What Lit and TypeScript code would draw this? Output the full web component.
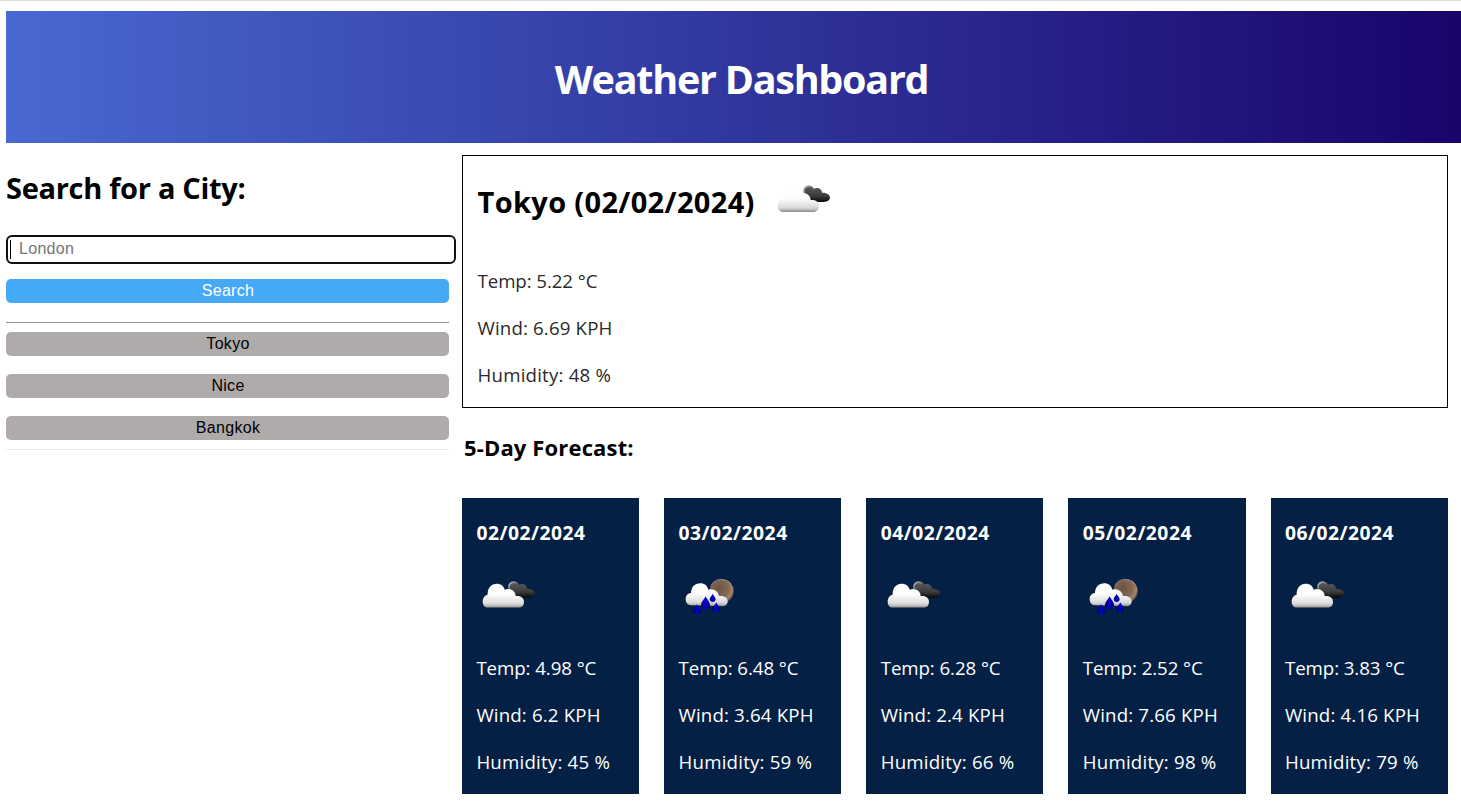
import { LitElement, html, css, svg } from "lit";
import { customElement, property } from "lit/decorators.js";

type Kind = "clouds" | "rain";
interface Day { date: string; kind: Kind; temp: string; wind: string; humidity: string; }

const DAYS: Day[] = [
  { date: "02/02/2024", kind: "clouds", temp: "4.98", wind: "6.2", humidity: "45" },
  { date: "03/02/2024", kind: "rain", temp: "6.48", wind: "3.64", humidity: "59" },
  { date: "04/02/2024", kind: "clouds", temp: "6.28", wind: "2.4", humidity: "66" },
  { date: "05/02/2024", kind: "rain", temp: "2.52", wind: "7.66", humidity: "98" },
  { date: "06/02/2024", kind: "clouds", temp: "3.83", wind: "4.16", humidity: "79" },
];
const CITIES = ["Tokyo", "Nice", "Bangkok"];

const rowStyles = css`
  .row { margin: 0; height: 30px; line-height: 30px; font-size: 18.7px; }
  .row + .row { margin-top: 17px; }
  .temp { letter-spacing: -0.08px; }
  .wind { letter-spacing: 0.15px; }
  .humidity { letter-spacing: 0.2px; }
`;

@customElement("weather-icon")
export class WeatherIcon extends LitElement {
  @property() kind: Kind = "clouds";

  static styles = css`
    :host { display: block; width: 64px; height: 50px; }
    .icon { display: block; width: 64px; height: 50px; }
  `;

  private defs() {
    return svg`<defs>
      <linearGradient id="white" x1="0" y1="0" x2="0" y2="1">
        <stop offset="0" stop-color="#fff"/><stop offset=".45" stop-color="#fdfdfd"/>
        <stop offset=".82" stop-color="#dcdcdc"/><stop offset=".94" stop-color="#b5b5b5"/><stop offset="1" stop-color="#666"/>
      </linearGradient>
      <linearGradient id="dark" x1="0" y1="0" x2="0" y2="1">
        <stop offset="0" stop-color="#5a5a5a"/><stop offset=".6" stop-color="#3c3b3b"/><stop offset="1" stop-color="#080808"/>
      </linearGradient>
      <linearGradient id="rim" x1="0" y1="0" x2="1" y2="1">
        <stop offset="0" stop-color="#ccc"/><stop offset=".5" stop-color="#777"/><stop offset="1" stop-color="#333"/>
      </linearGradient>
      <radialGradient id="moon" cx=".38" cy=".35" r=".68">
        <stop offset="0" stop-color="#6a5344"/><stop offset=".6" stop-color="#866852"/><stop offset=".85" stop-color="#a08671"/><stop offset="1" stop-color="#59483d"/>
      </radialGradient>
      <linearGradient id="drop" x1="0" y1="0" x2="1" y2="0">
        <stop offset="0" stop-color="#000070"/><stop offset=".5" stop-color="#0505c8"/><stop offset="1" stop-color="#00007a"/>
      </linearGradient>
    </defs>`;
  }

  private clouds() {
    return html`<svg class="icon" viewBox="18 -1 192 150">${this.defs()}
      <circle cx="131" cy="49" r="16.5" fill="url(#rim)"/>
      <path fill="url(#dark)" d="M119 47C123 36 137 35 145 44C156 37 171 42 171 55C184 55 195 61 195 69C195 78 187 83 176 83H150C135 82 121 70 119 47Z"/>
      <path fill="url(#white)" d="M54 112C44 112 38 104 38 94C38 83 44 75 53 73C52 53 64 40 80 40C92 40 101 46 104 58C119 52 137 61 137 77C153 75 162 84 162 94C162 105 156 112 145 112Z"/>
    </svg>`;
  }

  private rain() {
    return html`<svg class="icon" viewBox="12 -2 192 150">${this.defs()}
      <circle cx="140" cy="62" r="36" fill="url(#moon)"/>
      <path d="M108 45C114 31 127 26 139 26C151 26 162 31 168 40" fill="none" stroke="#c8b8aa" stroke-width="2" opacity=".8"/>
      <path fill="url(#white)" d="M48 104C38 104 32 95 32 85C32 75 38 68 48 67C48 49 60 38 76 38C89 38 97 45 100 57C115 53 129 62 132 76C148 74 158 82 158 92C158 101 151 107 142 107Z"/>
      <g fill="url(#drop)">
        <path d="M92 77C95 85 105 94 105 103C105 112 99 116 92 116C85 116 78 112 78 103C78 94 89 85 92 77Z"/>
        <path d="M113 69C115 75 122 80 122 86C122 91 118 94 113 94C108 94 104 91 104 86C104 80 111 75 113 69Z"/>
        <path d="M66 101C68 107 79 113 79 122C79 128 74 131 66 131C58 131 53 128 53 122C53 113 64 107 66 101Z"/>
        <path d="M124 95C126 102 135 108 135 116C135 122 130 125 124 125C118 125 112 122 112 116C112 108 122 102 124 95Z"/>
      </g>
    </svg>`;
  }

  render() { return this.kind === "rain" ? this.rain() : this.clouds(); }
}

@customElement("forecast-card")
export class ForecastCard extends LitElement {
  @property({ attribute: false }) day!: Day;

  static styles = [rowStyles, css`
    :host {
      display: block; box-sizing: border-box; height: 296px; padding: 20px 0 0 14.4px;
      background: #042045; color: #fff; font-family: "Open Sans", sans-serif; white-space: nowrap;
    }
    .date { margin: 0 0 22px; font-size: 19.3px; font-weight: 700; line-height: 30px; height: 30px; letter-spacing: 0.5px; }
    .icon { margin-bottom: 33px; }
  `];

  render() {
    const d = this.day;
    return html`
      <h4 class="date">${d.date}</h4>
      <weather-icon class="icon" .kind=${d.kind}></weather-icon>
      <p class="row temp">Temp: ${d.temp} °C</p>
      <p class="row wind">Wind: ${d.wind} KPH</p>
      <p class="row humidity">Humidity: ${d.humidity} %</p>`;
  }
}

@customElement("app-root")
export class AppRoot extends LitElement {
  static styles = [rowStyles, css`
    :host {
      display: block; box-sizing: border-box; height: 810px; overflow: hidden; background: #fff;
      border-top: 1px solid #dedede; color: #000; font-family: "Open Sans", sans-serif; white-space: nowrap;
    }
    .header {
      display: flex; justify-content: center; align-items: center; box-sizing: border-box;
      height: 132px; margin: 10px 0 0 6px; padding: 4px 0 0 16px;
      background: linear-gradient(to right, #4869d1, #19046a); color: #fff;
    }
    .title { margin: 0; font-size: 39.5px; line-height: 54px; font-weight: 700; letter-spacing: -1.25px; }
    .layout { display: grid; grid-template-columns: 443px 986px; column-gap: 13px; padding-left: 6px; }
    .search-title { margin: 25px 0 27px; height: 40px; line-height: 40px; font-size: 29px; font-weight: 700; letter-spacing: -0.3px; }
    .field {
      display: flex; align-items: center; box-sizing: border-box; width: 450px; height: 29px;
      border: 2px solid #101010; border-radius: 6px; padding-left: 2px;
    }
    .caret { width: 1px; height: 19px; background: #000; }
    .city {
      flex: 1; min-width: 0; border: 0; outline: 0; background: none; margin: 0; padding: 0 0 2px 8px;
      font: 16px "Liberation Sans", Arial, sans-serif; letter-spacing: 0.3px; color: #000;
    }
    .city::placeholder { color: #757575; opacity: 1; }
    .button {
      display: block; width: 443px; height: 24px; border: 0; border-radius: 5px; padding: 0 0 1px 1px;
      font: 16px/23px "Liberation Sans", Arial, sans-serif; letter-spacing: 0.3px; text-align: center; color: #000; background: #afabaa;
    }
    .primary { margin-top: 15px; background: #44aaf8; color: #fff; }
    .history { display: grid; row-gap: 18px; margin-top: 19px; padding: 9px 0; border-top: 1px solid #8f8f8f; border-bottom: 1px solid #ececec; }
    .today { box-sizing: border-box; height: 253px; margin-top: 12px; border: 1px solid #000; padding: 18px 0 0 14.5px; color: #2a2a2a; }
    .today-head { display: flex; height: 92px; color: #000; }
    .today-title { margin: 8px 0 0; width: 293px; height: 40px; line-height: 40px; font-size: 29px; font-weight: 700; letter-spacing: 0.35px; }
    .forecast-title { margin: 24px 0 36px 2px; height: 30px; line-height: 30px; font-size: 22px; font-weight: 700; letter-spacing: 0.15px; }
    .cards { display: grid; grid-template-columns: repeat(5, 177.15px); column-gap: 25px; }
  `];

  render() {
    return html`
      <header class="header"><h1 class="title">Weather Dashboard</h1></header>
      <main class="layout">
        <aside>
          <h2 class="search-title">Search for a City:</h2>
          <div class="field"><span class="caret"></span><input class="city" placeholder="London" /></div>
          <button class="button primary">Search</button>
          <div class="history">${CITIES.map((c) => html`<button class="button">${c}</button>`)}</div>
        </aside>
        <section>
          <div class="today">
            <div class="today-head">
              <h2 class="today-title">Tokyo (02/02/2024)</h2>
              <weather-icon kind="clouds"></weather-icon>
            </div>
            <p class="row temp">Temp: 5.22 °C</p>
            <p class="row wind">Wind: 6.69 KPH</p>
            <p class="row humidity">Humidity: 48 %</p>
          </div>
          <h3 class="forecast-title">5-Day Forecast:</h3>
          <div class="cards">${DAYS.map((d) => html`<forecast-card .day=${d}></forecast-card>`)}</div>
        </section>
      </main>`;
  }
}
